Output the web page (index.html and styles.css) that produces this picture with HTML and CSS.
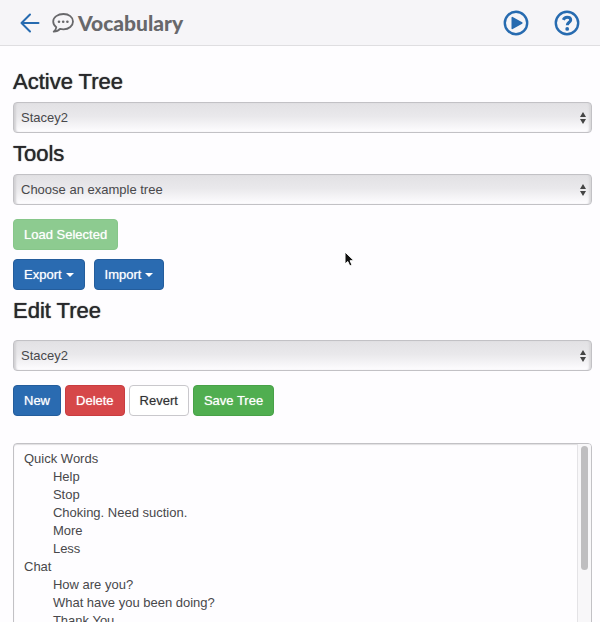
FILE: index.html
```html
<!DOCTYPE html>
<html lang="en">
<head>
<meta charset="utf-8">
<meta name="viewport" content="width=device-width, initial-scale=1">
<title>Vocabulary</title>
<link rel="stylesheet" href="styles.css">
</head>
<body>
<header class="topbar">
  <a class="icon-link" href="#" aria-label="Back">
    <svg width="20" height="20" viewBox="0 0 20 20" fill="none" stroke="currentColor" stroke-width="2" stroke-linecap="round" stroke-linejoin="round"><path d="M18.5 10H1.5M10 1.5L1.5 10L10 18.5"/></svg>
  </a>
  <h1 class="title">
    <svg class="bubble" width="22" height="20" viewBox="0 0 22 20"><path d="M11.500 1C5.800 1 1.200 4.200 1.200 8.500C1.200 10.800 2.400 12.800 4.300 14.200C4.200 16 3.200 17.300 1.700 18.600C4.400 18.600 6.700 17.600 8 15.900C9.100 16.150 10.300 16.300 11.500 16.300C17 16.300 21 12.800 21 8.500C21 4.200 17 1 11.500 1Z" fill="none" stroke="currentColor" stroke-width="1.800" stroke-linejoin="round"/><circle cx="7" cy="8.700" r="1.300" fill="currentColor"/><circle cx="11.200" cy="8.700" r="1.300" fill="currentColor"/><circle cx="15.400" cy="8.700" r="1.300" fill="currentColor"/></svg>
    <span>Vocabulary</span>
  </h1>
  <nav class="actions">
    <a class="icon-link" href="#" aria-label="Play">
      <svg width="26" height="26" viewBox="0 0 26 26"><circle cx="13" cy="13" r="11.200" fill="none" stroke="currentColor" stroke-width="2.400"/><path d="M9.300 7.600V18.400L18.800 13Z" fill="currentColor" stroke="currentColor" stroke-width="1.600" stroke-linejoin="round"/></svg>
    </a>
    <a class="icon-link" href="#" aria-label="Help">
      <svg width="26" height="26" viewBox="0 0 26 26" fill="none" stroke="currentColor"><circle cx="13" cy="13" r="11.200" stroke-width="2.400"/><path d="M9.300 9.800C10.100 7.900 11.400 7.200 13.100 7.200C15.300 7.200 16.700 8.400 16.700 10C16.700 12.400 13.300 12.300 13.300 15.300" stroke-width="3"/><circle cx="13.200" cy="18.900" r="1.900" fill="currentColor" stroke="none"/></svg>
    </a>
  </nav>
</header>
<main class="content">
  <h2><label for="active">Active Tree</label></h2>
  <div class="select">
    <select id="active"><option>Stacey2</option></select>
    <svg class="arrows" width="6" height="12" viewBox="0 0 6 12"><path d="M3 0L6 5H0ZM0 7H6L3 12Z" fill="currentColor"/></svg>
  </div>
  <h2><label for="example">Tools</label></h2>
  <div class="select">
    <select id="example"><option>Choose an example tree</option></select>
    <svg class="arrows" width="6" height="12" viewBox="0 0 6 12"><path d="M3 0L6 5H0ZM0 7H6L3 12Z" fill="currentColor"/></svg>
  </div>
  <div class="row load">
    <button class="btn green" type="button" disabled>Load Selected</button>
  </div>
  <div class="row menus">
    <button class="btn blue" type="button">Export<span class="caret"></span></button>
    <button class="btn blue" type="button">Import<span class="caret"></span></button>
  </div>
  <h2 class="edit-heading"><label for="edit">Edit Tree</label></h2>
  <div class="select">
    <select id="edit"><option>Stacey2</option></select>
    <svg class="arrows" width="6" height="12" viewBox="0 0 6 12"><path d="M3 0L6 5H0ZM0 7H6L3 12Z" fill="currentColor"/></svg>
  </div>
  <div class="row edit-actions">
    <button class="btn blue" type="button">New</button>
    <button class="btn red" type="button">Delete</button>
    <button class="btn plain" type="button">Revert</button>
    <button class="btn green" type="button">Save Tree</button>
  </div>
  <div class="editor">
    <textarea aria-label="Tree contents" spellcheck="false" rows="16">Quick Words
	Help
	Stop
	Choking. Need suction.
	More
	Less
Chat
	How are you?
	What have you been doing?
	Thank You
</textarea>
    <div class="track"><div class="thumb"></div></div>
  </div>
</main>
<svg class="pointer" width="12" height="18" viewBox="0 0 12 18"><path d="M1 1V13L3.800 10.500L5.800 15L8 14L6.100 9.700H10Z" fill="#111" stroke="#fff"/></svg>
</body>
</html>
```
FILE: styles.css
```css
* {
  box-sizing: border-box;
}

body {
  margin: 0;
  overflow-x: hidden;
  background: #fefdff;
  color: #28282b;
  font: 13px/18px "Liberation Sans", Arial, sans-serif;
}

svg {
  display: block;
}

.topbar {
  display: flex;
  align-items: center;
  height: 46px;
  padding: 0 20px;
  background: #f6f5f8;
  border-bottom: 1px solid #dfdee1;
}

.icon-link {
  color: #276bb0;
}

.title {
  display: flex;
  align-items: center;
  gap: 4px;
  margin: 0 0 0 12px;
  color: #68686b;
  font: 900 21px/26px Lato, "Open Sans", sans-serif;
}

.actions {
  display: flex;
  gap: 25px;
  margin-left: auto;
}

.content {
  padding: 23px 8px 20px 13px;
}

h2 {
  margin: 8px 0 7px;
  font-size: 22px;
  font-weight: 500;
  line-height: 26px;
  text-shadow: 0 0 1px #28282b;
}

h2:first-child {
  margin-top: 0;
}

.edit-heading {
  margin-bottom: 16px;
}

.select {
  position: relative;
}

select {
  display: block;
  width: 100%;
  height: 31px;
  padding: 0 20px 0 7px;
  appearance: none;
  background: linear-gradient(#e2e1e4, #e9e8eb 45%, #fefdff);
  border: 1px solid #c2c1c5;
  border-radius: 4px;
  box-shadow: inset 3px 0 2px -1px #d2d1d4, inset -3px 0 2px -1px #d8d7da;
  color: #48484b;
  font: inherit;
}

.arrows {
  position: absolute;
  top: 10px;
  right: 6px;
  color: #444;
  pointer-events: none;
}

.row {
  display: flex;
}

.load {
  margin-top: 14px;
}

.menus {
  gap: 9px;
  margin-top: 9px;
}

.edit-actions {
  gap: 4px;
  margin-top: 14px;
}

.btn {
  display: flex;
  align-items: center;
  height: 31px;
  padding: 0 10px;
  border: 1px solid;
  border-radius: 4px;
  color: #fff;
  font: inherit;
  text-shadow: 0 0 1px rgba(255, 255, 255, 0.7);
}

.blue {
  background: #2a6bb1;
  border-color: #245d9c;
}

.red {
  background: #d64749;
  border-color: #c93c40;
}

.green {
  background: #50ae50;
  border-color: #48a148;
}

.green:disabled {
  background: #8dcb90;
  border-color: #87c68a;
}

.plain {
  background: #fff;
  border-color: #c9c8cc;
  color: #303033;
  text-shadow: 0 0 1px rgba(48, 48, 51, 0.4);
}

.caret {
  margin-left: 4px;
  border: 4px solid transparent;
  border-top-color: currentColor;
  border-bottom: 0;
}

.editor {
  position: relative;
  margin-top: 27px;
}

textarea {
  display: block;
  width: 100%;
  padding: 6px 24px 6px 10px;
  overflow: hidden;
  resize: none;
  background: #fefdff;
  border: 1px solid #c2c1c5;
  border-radius: 4px;
  box-shadow: inset 0 1px 1px #e0dfe2;
  color: #48484b;
  font: inherit;
  tab-size: 8;
}

.track {
  position: absolute;
  top: 1px;
  right: 1px;
  bottom: 1px;
  width: 14px;
  padding: 2px 3px;
  background: #f8f7f9;
  border-left: 1px solid #e4e3e6;
  border-radius: 0 3px 3px 0;
}

.thumb {
  width: 7px;
  height: 42%;
  background: #bfbec0;
  border-radius: 4px;
}

.pointer {
  position: absolute;
  top: 251px;
  left: 344px;
  pointer-events: none;
}
```
